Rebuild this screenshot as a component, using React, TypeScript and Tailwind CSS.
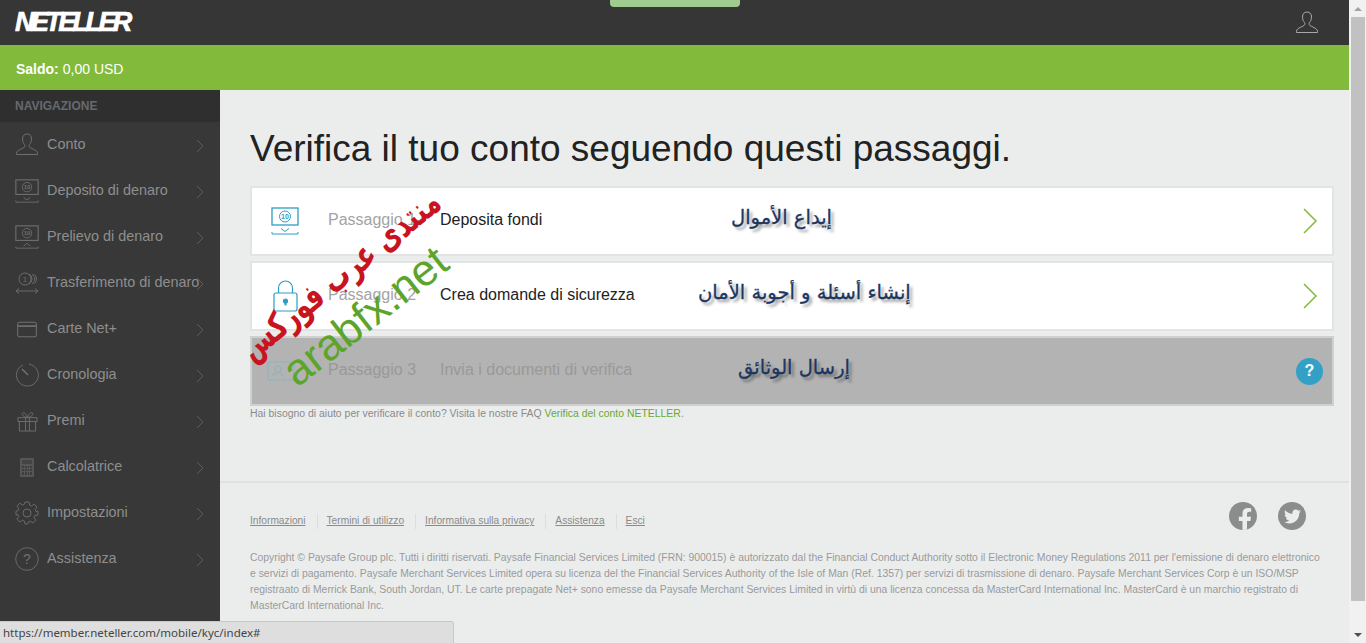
import { FaFacebookF, FaTwitter } from "react-icons/fa"

const stroke = "#6f6f6f"

function UserIcon({ color = stroke, className = "" }: { color?: string; className?: string }) {
  return (
    <svg viewBox="0 0 24 24" className={className} fill="none" stroke={color} strokeWidth="1">
      <path d="M12 1c-3 0-4.500 2-4.500 5 0 2.500 1 4.500 2 5.500.6 1 .5 2.200-.4 3-1.500 1.100-6.300 2.500-7.300 4.500-.3.800-.4 2-.4 2.500h21.200c0-.5-.1-1.700-.4-2.500-1-2-5.800-3.400-7.300-4.500-.9-.8-1-2-.4-3 1-1 2-3 2-5.500 0-3-1.500-5-4.500-5z" />
    </svg>
  )
}

function MoneyIcon({ up, color = stroke, className = "" }: { up?: boolean; color?: string; className?: string }) {
  return (
    <svg viewBox="0 0 28 28" className={className} fill="none" stroke={color} strokeWidth="1">
      <rect x="1" y="1" width="26" height="17" strokeWidth="1.300" />
      <circle cx="14" cy="9.500" r="5.500" />
      <text x="14" y="12" textAnchor="middle" fontSize="7" fontWeight="bold" fill={color} stroke="none" fontFamily="Liberation Sans, sans-serif">10</text>
      <path d={up ? "M10 24.500l4-3 4 3" : "M10 21.500l4 3 4-3"} />
      <path d="M1 25v2h26v-2" />
    </svg>
  )
}

function TransferIcon() {
  return (
    <svg viewBox="0 0 24 24" className="w-6 h-6" fill="none" stroke={stroke} strokeWidth="0.900">
      <circle cx="10" cy="8" r="6" />
      <text x="10" y="11" textAnchor="middle" fontSize="8" fill={stroke} stroke="none" fontFamily="Liberation Sans, sans-serif">1</text>
      <path d="M14 2.800a6 6 0 0 1 0 10.400M17 3a6 6 0 0 1 0 10M19.500 3.500a6 6 0 0 1 0 9" />
      <path d="M1 20h22M4 17.500L1 20l3 2.500M20 17.500l3 2.500-3 2.500" />
    </svg>
  )
}

function CardIcon() {
  return (
    <svg viewBox="0 0 24 20" className="w-[22px] h-[17px]" fill="none" stroke={stroke} strokeWidth="1.200">
      <rect x="1" y="1.500" width="22" height="17" rx="2" />
      <path d="M1 6h22" strokeWidth="2" />
    </svg>
  )
}

function ClockIcon() {
  return (
    <svg viewBox="0 0 24 24" className="w-6 h-6" fill="none" stroke={stroke} strokeWidth="0.900">
      <path d="M8 2a11 11 0 1 0 6-.8" />
      <path d="M7 6l6 6" strokeWidth="1.600" />
    </svg>
  )
}

function GiftIcon() {
  return (
    <svg viewBox="0 0 22 22" className="w-[21px] h-[21px]" fill="none" stroke={stroke} strokeWidth="1">
      <path d="M1 7h20v4H1zM2.500 11v10h17V11M9 7v14M13 7v14" />
      <path d="M11 7C8 6 5 5 5.500 2.500 6.500.5 10 3 11 7zM11 7c3-1 6-2 5.500-4.500C15.500.5 12 3 11 7z" />
    </svg>
  )
}

function CalcIcon() {
  const keys = [0, 1, 2, 3, 4, 5, 6, 7, 8, 9, 10, 11]
  return (
    <div className="w-[14px] h-[19px] bg-[#565656] rounded-[1px] p-[2px] flex flex-col gap-[2px]">
      <div className="h-[4px] bg-[#444444]" />
      <div className="grid grid-cols-4 gap-[1px] flex-1">
        {keys.map((k) => (
          <div key={k} className="bg-[#3e3e3e]" />
        ))}
      </div>
    </div>
  )
}

function GearIcon() {
  return (
    <svg viewBox="0 0 24 24" className="w-6 h-6" fill="none" stroke={stroke} strokeWidth="0.900">
      <path d="M10 1h4l.6 3.200 1.900.8 2.700-1.800 2.800 2.800-1.800 2.700.8 1.900L23 10.200v3.800l-3.200.6-.8 1.900 1.800 2.700-2.800 2.800-2.700-1.800-1.900.8L12.800 23H10l-.6-3-1.900-.8-2.700 1.800-2.800-2.800 1.800-2.700-.8-1.900L1 14v-3.800l2-.6.8-1.900L2 5l2.800-2.800L7.500 4l1.900-.8z" />
      <circle cx="12" cy="12" r="4" />
    </svg>
  )
}

function HelpIcon() {
  return (
    <svg viewBox="0 0 24 24" className="w-6 h-6" fill="none" stroke={stroke} strokeWidth="0.900">
      <circle cx="12" cy="12" r="11.300" />
      <text x="12" y="17" textAnchor="middle" fontSize="14" fill={stroke} stroke="none" fontFamily="Liberation Sans, sans-serif">?</text>
    </svg>
  )
}

const navItems = [
  { label: "Conto", icon: <UserIcon className="w-6 h-6" /> },
  { label: "Deposito di denaro", icon: <MoneyIcon className="w-6 h-6" /> },
  { label: "Prelievo di denaro", icon: <MoneyIcon up className="w-6 h-6" /> },
  { label: "Trasferimento di denaro", icon: <TransferIcon /> },
  { label: "Carte Net+", icon: <CardIcon /> },
  { label: "Cronologia", icon: <ClockIcon /> },
  { label: "Premi", icon: <GiftIcon /> },
  { label: "Calcolatrice", icon: <CalcIcon /> },
  { label: "Impostazioni", icon: <GearIcon /> },
  { label: "Assistenza", icon: <HelpIcon /> },
]

const footerLinks = ["Informazioni", "Termini di utilizzo", "Informativa sulla privacy", "Assistenza", "Esci"]

function LockIcon() {
  return (
    <svg viewBox="0 0 25 32" className="w-[25px] h-8 ml-[2px]" fill="none" stroke="#2f9cc4" strokeWidth="1.200">
      <path d="M5.500 13V8a7 7 0 0 1 14 0v5" />
      <rect x="1" y="13" width="23" height="18" rx="2" />
      <circle cx="12.500" cy="21" r="2" fill="#2f9cc4" />
      <path d="M12.500 21v4.500" strokeWidth="2" />
    </svg>
  )
}

function IdIcon() {
  return (
    <svg viewBox="0 0 28 20" className="w-7 h-5 -ml-[4px]" fill="none" stroke="#8fb3bf" strokeWidth="1.200">
      <rect x="1" y="1" width="26" height="18" rx="1.500" />
      <circle cx="11" cy="8" r="3" />
      <path d="M5 16c1-3 3-4 6-4s5 1 6 4" />
    </svg>
  )
}

function Step({ icon, step, title, arabic, arabicClass, disabled }: {
  icon: React.ReactNode
  step: string
  title: string
  arabic: string
  arabicClass: string
  disabled?: boolean
}) {
  return (
    <div className={`h-[70px] border-2 flex items-center ${disabled ? "bg-[#b3b3b3] border-[#cfd0d0]" : "bg-white border-[#e2e4e3]"}`}>
      <div className="w-[76px] pl-[19px] shrink-0">{icon}</div>
      <span className={`w-[112px] shrink-0 mb-[2px] text-base ${disabled ? "text-[#999999]" : "text-[#a3a3a3]"}`}>{step}</span>
      <span className={`w-[250px] shrink-0 mb-[2px] text-base ${disabled ? "text-[#999999]" : "text-[#222222]"}`}>{title}</span>
      <span dir="rtl" className={`text-[19.500px] leading-none -mt-[6px] text-[#1c3660] [-webkit-text-stroke:0.3px_#1c3660] [text-shadow:3px_3px_3px_rgba(0,0,0,0.4)] [font-family:'DejaVu_Sans',sans-serif] ${arabicClass}`}>{arabic}</span>
      <div className="ml-auto mr-[9px]">
        {disabled ? (
          <div className="w-[27px] h-[27px] rounded-full bg-[#34a0c6] flex items-center justify-center text-white font-bold text-base">?</div>
        ) : (
          <svg viewBox="0 0 16 28" className="w-4 h-7 mr-[5px]" fill="none" stroke="#82bb3c" strokeWidth="1.500">
            <path d="M2 2l12 12L2 26" />
          </svg>
        )}
      </div>
    </div>
  )
}

export default function App() {
  return (
    <div className="h-[643px] w-[1366px] overflow-hidden relative flex bg-[#ebeded] font-['Liberation_Sans',Arial,sans-serif]">
      <div className="w-[1349px] flex flex-col shrink-0">
        {/* Header */}
        <header className="h-[45px] bg-[#363636] flex items-center justify-between relative shrink-0">
          <span className="ml-[15px] text-[27px] font-bold italic text-white tracking-[-3.600px] leading-none [-webkit-text-stroke:0.7px_white]">NETELLER</span>
          <div className="absolute left-[610px] top-0 w-[130px] h-[7px] bg-[#a0cc8f] rounded-b-[4px]" />
          <UserIcon color="#a9a9a9" className="w-6 h-6 mr-[30px]" />
        </header>
        <div className="h-[45px] bg-[#82bb3c] flex items-center pl-4 pt-[2px] text-sm text-white shrink-0">
          <b className="mr-1">Saldo:</b> 0,00 USD
        </div>

        <div className="flex flex-1 min-h-0">
          {/* Sidebar */}
          <aside className="w-[220px] bg-[#383838] shrink-0">
            <div className="h-8 bg-[#2f2f2f] flex items-center pl-[15px] text-xs font-bold text-[#666a6e]">NAVIGAZIONE</div>
            {navItems.map((item) => (
              <div key={item.label} className="h-[46px] flex items-center relative pl-[15px] text-[14.400px] text-[#8e8e8e]">
                <div className="w-6 flex justify-center shrink-0">{item.icon}</div>
                <span className="ml-2 mb-[1px] whitespace-nowrap">{item.label}</span>
                <svg viewBox="0 0 8 14" className="absolute left-[196px] top-[17px] w-2 h-[14px]" fill="none" stroke="#5d5d5d" strokeWidth="1">
                  <path d="M1 1l6 6-6 6" />
                </svg>
              </div>
            ))}
          </aside>

          {/* Main */}
          <main className="flex-1 min-w-0">
            <div className="px-[30px] pr-[15px] pt-[37px] h-[393px] border-b-2 border-[#e0e2e1]">
              <h1 className="text-[37px] leading-[44px] text-[#222222] mb-[15px]">Verifica il tuo conto seguendo questi passaggi.</h1>
              <div className="flex flex-col gap-[5px]">
                <Step icon={<MoneyIcon color="#2f9cc4" className="w-7 h-7" />} step="Passaggio 1" title="Deposita fondi" arabic="إيداع الأموال" arabicClass="ml-[41px]" />
                <Step icon={<LockIcon />} step="Passaggio 2" title="Crea domande di sicurezza" arabic="إنشاء أسئلة و أجوبة الأمان" arabicClass="ml-[8px]" />
                <Step disabled icon={<IdIcon />} step="Passaggio 3" title="Invia i documenti di verifica" arabic="إرسال الوثائق" arabicClass="ml-[48px]" />
              </div>
              <p className="text-[10.450px] leading-[16px] text-[#8a8a8a]">
                Hai bisogno di aiuto per verificare il conto? Visita le nostre FAQ <span className="text-[#6aa82e]">Verifica del conto NETELLER</span>.
              </p>
            </div>

            <footer className="px-[30px] pr-[15px]">
              <div className="flex justify-between h-[67px]">
                <div className="flex text-[10.200px] text-[#8a8a8a] underline pt-[31px]">
                  {footerLinks.map((l, i) => (
                    <span key={l} className={i < footerLinks.length - 1 ? "pr-[11px] mr-[9px] border-r border-[#dcdcdc] h-[15px] leading-[14px]" : "h-[15px] leading-[14px]"}>{l}</span>
                  ))}
                </div>
                <div className="flex gap-[21px] mr-[28px] pt-[19px]">
                  <div className="w-[28px] h-[28px] rounded-full bg-[#8c8c8c] flex items-end justify-center overflow-hidden"><FaFacebookF className="text-[#ebeded] w-[20px] h-[23px] ml-[3px] -mb-[1px]" /></div>
                  <div className="w-[28px] h-[28px] rounded-full bg-[#8c8c8c] flex items-center justify-center"><FaTwitter className="text-[#ebeded] w-[17px] h-[17px]" /></div>
                </div>
              </div>
              <p className="text-[10.400px] leading-4 text-[#9a9a9a] pr-[12px]">
                Copyright © Paysafe Group plc. Tutti i diritti riservati. Paysafe Financial Services Limited (FRN: 900015) è autorizzato dal the Financial Conduct Authority sotto il Electronic Money Regulations 2011 per l'emissione di denaro elettronico e servizi di pagamento. Paysafe Merchant Services Limited opera su licenza del the Financial Services Authority of the Isle of Man (Ref. 1357) per servizi di trasmissione di denaro. Paysafe Merchant Services Corp è un ISO/MSP registraato di Merrick Bank, South Jordan, UT. Le carte prepagate Net+ sono emesse da Paysafe Merchant Services Limited in virtù di una licenza concessa da MasterCard International Inc. MasterCard è un marchio registrato di MasterCard International Inc.
              </p>
            </footer>
          </main>
        </div>
      </div>

      {/* Scrollbar */}
      <div className="w-[17px] h-full bg-[#f1f1f1] flex flex-col items-center shrink-0">
        <div className="h-[17px] flex items-center justify-center">
          <div className="border-x-[4px] border-x-transparent border-b-[4px] border-b-[#a3a3a3]" />
        </div>
        <div className="w-[14px] h-[584px] bg-[#c1c1c1]" />
        <div className="mt-auto h-[17px] flex items-center justify-center">
          <div className="border-x-[4px] border-x-transparent border-t-[4px] border-t-[#505050]" />
        </div>
      </div>

      {/* Watermarks */}
      <span dir="rtl" className="absolute left-[340px] top-[275px] text-[36px] font-bold text-[#c8141e] whitespace-nowrap [transform:translate(-50%,-50%)_rotate(-39deg)_scaleX(0.7)] [font-family:'DejaVu_Sans',sans-serif]">منتدى عرب فوركس</span>
      <span className="absolute left-[365px] top-[316px] text-[44px] text-[#5da52a] whitespace-nowrap [transform:translate(-50%,-50%)_rotate(-38deg)] leading-none">arabfx.net</span>

      {/* Browser status bubble */}
      <div className="absolute left-0 bottom-0 w-[454px] h-[22px] bg-[#dedede] border-t border-r border-[#c8c8c8] rounded-tr-[3px] flex items-center pl-[3px] text-[11.500px] text-[#444444] [font-family:'Noto_Sans',sans-serif]">
        https://member.neteller.com/mobile/kyc/index#
      </div>
    </div>
  )
}
